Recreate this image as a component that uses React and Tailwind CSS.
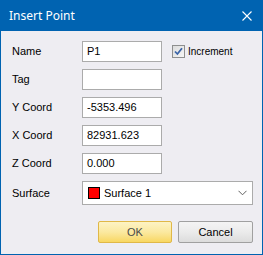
import React from 'react';

const fields = [
  { label: 'Name', value: 'P1' },
  { label: 'Tag', value: '' },
  { label: 'Y Coord', value: '-5353.496' },
  { label: 'X Coord', value: '82931.623' },
  { label: 'Z Coord', value: '0.000' },
];

const CloseIcon = () => (
  <svg width="10" height="10" viewBox="0 0 10 10" className="block">
    <path d="M0.5 0.5 L9.5 9.5 M9.5 0.5 L0.5 9.5" stroke="#ffffff" strokeWidth="1.1" fill="none" />
  </svg>
);

const CheckBox = () => (
  <span className="flex h-[13px] w-[13px] items-center justify-center border border-[#8e8f8f] bg-gradient-to-br from-[#dcdcdc] to-[#f6f6f6]">
    <svg width="9" height="9" viewBox="0 0 9 9" className="block">
      <path d="M1 4.5 L3.4 7 L8 1.2" stroke="#3b64a8" strokeWidth="1.8" fill="none" />
    </svg>
  </span>
);

const Chevron = () => (
  <svg width="9" height="6" viewBox="0 0 9 6" className="block">
    <path d="M0.5 0.8 L4.5 4.8 L8.5 0.8" stroke="#606060" strokeWidth="1" fill="none" />
  </svg>
);

export default function App() {
  return (
    <div className="flex h-[255px] w-[263px] flex-col border border-[#0063b1] bg-[#eeedf2] font-['Liberation_Sans',Arial,sans-serif] text-[11px] text-black">
      {/* title bar */}
      <div className="flex h-[30px] shrink-0 items-center justify-between bg-[#0063b1] pl-[8px] pr-[10px] text-[12px] text-white">
        <span className="font-['Noto_Sans','Liberation_Sans',sans-serif] leading-none">Insert Point</span>
        <CloseIcon />
      </div>

      {/* body */}
      <div className="flex flex-1 flex-col pl-[11px] pr-[9px] pt-[10px]">
        <div className="flex flex-col gap-[7px]">
          {fields.map((f, i) => (
            <div key={i} className="flex h-[21px] items-center">
              <span className="w-[70px]">{f.label}</span>
              <div className="flex h-[21px] w-[80px] items-center border border-[#ababab] bg-white px-[4px]">
                {f.value}
              </div>
              {i === 0 && (
                <label className="ml-[10px] flex items-center gap-[3px]">
                  <CheckBox />
                  <span className="text-[10px]">Increment</span>
                </label>
              )}
            </div>
          ))}
          <div className="flex h-[24px] items-center">
            <span className="w-[70px]">Surface</span>
            <div className="flex h-[24px] flex-1 items-center border border-[#ababab] bg-white pl-[5px] pr-[5px]">
              <span className="h-[12px] w-[12px] border border-black bg-[#ff0000]" />
              <span className="ml-[4px] flex-1">Surface 1</span>
              <Chevron />
            </div>
          </div>
        </div>

        <div className="mt-[16px] flex justify-end gap-[6px]">
          <button className="h-[22px] w-[74px] rounded-[2px] border border-[#e0b847] bg-gradient-to-b from-[#fdf3c4] via-[#fbe9a0] to-[#f8d760] text-[#4a4a4a]">
            OK
          </button>
          <button className="h-[22px] w-[75px] rounded-[2px] border border-[#a0a0a0] bg-gradient-to-b from-[#f4f4f4] via-[#ebebeb] to-[#dcdcdc] text-black">
            Cancel
          </button>
        </div>
      </div>
    </div>
  );
}
